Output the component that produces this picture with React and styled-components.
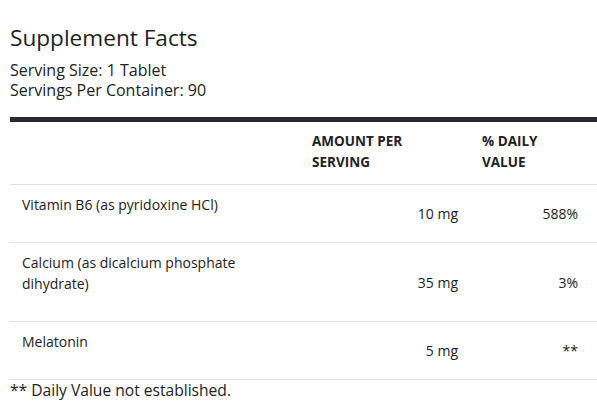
import React from "react";
import styled, { createGlobalStyle } from "styled-components";

const GlobalStyle = createGlobalStyle`
  body {
    margin: 0;
    background: #fff;
    font-family: "Open Sans", "Lato", sans-serif;
    color: #222;
  }
`;

const Wrapper = styled.div`
  padding: 25px 0 0 10px;
`;

const Title = styled.h2`
  margin: 0;
  font-size: 22.6px;
  line-height: 26px;
  font-weight: 400;
  color: #1e1e26;
`;

const Serving = styled.div`
  margin-top: 9px;
  font-size: 16px;
  line-height: 20px;
`;

const Table = styled.table`
  width: 587px;
  margin-top: 17px;
  table-layout: fixed;
  border-collapse: collapse;
  border-top: 5px solid #2a2a31;
  font-size: 14px;
  line-height: 21px;
`;

const Row = styled.tr`
  border-bottom: 1px solid #e0e0e0;
`;

const HeadCell = styled.th`
  box-sizing: border-box;
  width: ${({ w }) => w}px;
  padding: 9px 12px 11px;
  text-align: left;
  vertical-align: top;
  font-size: 13.5px;
  font-weight: 700;
  text-transform: uppercase;
`;

const NameCell = styled.td`
  padding: 9px 12px 27px;
  vertical-align: top;
`;

const ValueCell = styled.td`
  padding: 0 ${({ pr }) => pr || 12}px 0 12px;
  text-align: right;
  vertical-align: middle;
`;

const Footnote = styled.div`
  font-size: 15.6px;
  line-height: 20px;
`;

const rows = [
  { name: "Vitamin B6 (as pyridoxine HCl)", amount: "10 mg", dv: "588%" },
  { name: <>Calcium (as dicalcium phosphate<br />dihydrate)</>, amount: "35 mg", dv: "3%" },
  { name: "Melatonin", amount: "5 mg", dv: "**" },
];

export default function App() {
  return (
    <Wrapper>
      <GlobalStyle />
      <Title>Supplement Facts</Title>
      <Serving>
        Serving Size: 1 Tablet
        <br />
        Servings Per Container: 90
      </Serving>
      <Table>
        <thead>
          <Row>
            <HeadCell w={290}></HeadCell>
            <HeadCell w={170}>
              Amount per
              <br />
              serving
            </HeadCell>
            <HeadCell w={127}>
              % Daily
              <br />
              value
            </HeadCell>
          </Row>
        </thead>
        <tbody>
          {rows.map((r, i) => (
            <Row key={i}>
              <NameCell>{r.name}</NameCell>
              <ValueCell>{r.amount}</ValueCell>
              <ValueCell pr={19}>{r.dv}</ValueCell>
            </Row>
          ))}
        </tbody>
      </Table>
      <Footnote>** Daily Value not established.</Footnote>
    </Wrapper>
  );
}
